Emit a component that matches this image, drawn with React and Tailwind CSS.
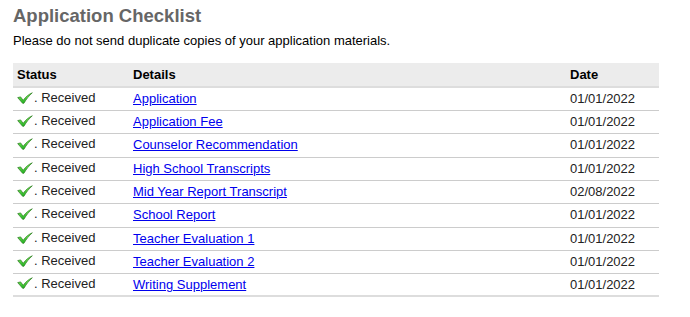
import React from "react";

const rows = [
  ["Application", "01/01/2022"],
  ["Application Fee", "01/01/2022"],
  ["Counselor Recommendation", "01/01/2022"],
  ["High School Transcripts", "01/01/2022"],
  ["Mid Year Report Transcript", "02/08/2022"],
  ["School Report", "01/01/2022"],
  ["Teacher Evaluation 1", "01/01/2022"],
  ["Teacher Evaluation 2", "01/01/2022"],
  ["Writing Supplement", "01/01/2022"],
];

function Check() {
  return (
    <svg width="16" height="12" viewBox="0 0 16 12" className="inline-block mr-[1px]">
      <defs>
        <linearGradient id="g" x1="0" y1="0" x2="0" y2="1">
          <stop offset="0" stopColor="#86f564" />
          <stop offset="1" stopColor="#1fb01f" />
        </linearGradient>
      </defs>
      <path
        d="M0.7 5.6 L3.6 4.9 L6.2 8.3 C8.8 4.8 11.6 2.4 15.3 0.8 C12.2 3.5 9.4 6.9 6.9 11.3 L5.6 11.3 Z"
        fill="url(#g)"
        stroke="#2a7a1c"
        strokeWidth="0.7"
        strokeLinejoin="round"
      />
    </svg>
  );
}

export default function App() {
  return (
    <div className="bg-white w-[690px] h-[317px] px-[13px] pt-[5px]" style={{ fontFamily: '"Liberation Sans", Arial, sans-serif' }}>
      <h1 className="text-[18.5px] leading-[22px] font-bold text-[#666666]">Application Checklist</h1>
      <p className="text-[13px] leading-[16px] text-black mt-[6px]">Please do not send duplicate copies of your application materials.</p>
      <table className="w-[646px] mt-[14px] border-collapse text-[13px] text-black">
        <thead>
          <tr className="bg-[#ececec] border-b-2 border-[#dddddd] h-[24px]">
            <th className="text-left font-bold pl-[4px] w-[116px]">Status</th>
            <th className="text-left font-bold pl-[4px]">Details</th>
            <th className="text-left font-bold pl-[4px] w-[93px]">Date</th>
          </tr>
        </thead>
        <tbody>
          {rows.map(([name, date], i) => (
            <tr
              key={name}
              className={`${i === 2 || i === 5 ? "h-[24px]" : "h-[23px]"} ${i === rows.length - 1 ? "border-b-2 border-[#dddddd]" : "border-b border-[#cccccc]"}`}
            >
              <td className="pl-[4px] whitespace-nowrap">
                <span className="inline-flex items-center">
                  <Check />
                  <span className="text-[#222]">. Received</span>
                </span>
              </td>
              <td className="pl-[4px]">
                <a href="#" className="text-[#0000ee] underline">{name}</a>
              </td>
              <td className="pl-[4px] text-[#222]">{date}</td>
            </tr>
          ))}
        </tbody>
      </table>
    </div>
  );
}
